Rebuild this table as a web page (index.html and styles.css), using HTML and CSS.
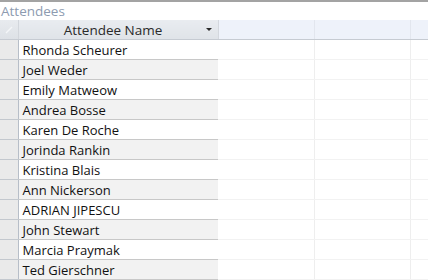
FILE: index.html
```html
<!DOCTYPE html>
<html>
<head>
<meta charset="utf-8">
<link rel="stylesheet" href="styles.css">
</head>
<body>
<div class="sheet">
  <div class="title">Attendees</div>
  <table class="grid">
    <colgroup>
      <col class="c-sel"><col class="c-name"><col class="c-empty"><col class="c-empty"><col class="c-rest">
    </colgroup>
    <thead>
      <tr>
        <th class="sel"><svg width="10" height="10" viewBox="0 0 10 10"><path d="M2 8 L8 2" stroke="#f4f6f8" stroke-width="1.4"/></svg></th>
        <th class="name">Attendee Name<span class="arrow"></span></th>
        <th class="blank"></th><th class="blank"></th><th class="blank"></th>
      </tr>
    </thead>
    <tbody>
      <tr><td class="sel"></td><td class="name">Rhonda Scheurer</td><td class="blank"></td><td class="blank"></td><td class="blank"></td></tr>
      <tr><td class="sel"></td><td class="name">Joel Weder</td><td class="blank"></td><td class="blank"></td><td class="blank"></td></tr>
      <tr><td class="sel"></td><td class="name">Emily Matweow</td><td class="blank"></td><td class="blank"></td><td class="blank"></td></tr>
      <tr><td class="sel"></td><td class="name">Andrea Bosse</td><td class="blank"></td><td class="blank"></td><td class="blank"></td></tr>
      <tr><td class="sel"></td><td class="name">Karen De Roche</td><td class="blank"></td><td class="blank"></td><td class="blank"></td></tr>
      <tr><td class="sel"></td><td class="name">Jorinda Rankin</td><td class="blank"></td><td class="blank"></td><td class="blank"></td></tr>
      <tr><td class="sel"></td><td class="name">Kristina Blais</td><td class="blank"></td><td class="blank"></td><td class="blank"></td></tr>
      <tr><td class="sel"></td><td class="name">Ann Nickerson</td><td class="blank"></td><td class="blank"></td><td class="blank"></td></tr>
      <tr><td class="sel"></td><td class="name">ADRIAN JIPESCU</td><td class="blank"></td><td class="blank"></td><td class="blank"></td></tr>
      <tr><td class="sel"></td><td class="name">John Stewart</td><td class="blank"></td><td class="blank"></td><td class="blank"></td></tr>
      <tr><td class="sel"></td><td class="name">Marcia Praymak</td><td class="blank"></td><td class="blank"></td><td class="blank"></td></tr>
      <tr><td class="sel"></td><td class="name">Ted Gierschner</td><td class="blank"></td><td class="blank"></td><td class="blank"></td></tr>
    </tbody>
  </table>
</div>
</body>
</html>
```
FILE: styles.css
```css
html, body {
  margin: 0;
  padding: 0;
  background: #ffffff;
  overflow: hidden;
}

.sheet {
  width: 428px;
  height: 280px;
  font-family: "Open Sans", "Noto Sans", sans-serif;
}

.title {
  height: 18px;
  border-top: 2px solid #a3a3a3;
  color: #8d9bb0;
  font-size: 13.5px;
  line-height: 19px;
  padding-left: 1px;
  box-sizing: content-box;
}

.grid {
  border-collapse: collapse;
  table-layout: fixed;
  width: 440px;
}

.c-sel { width: 18px; }
.c-name { width: 200px; }
.c-empty { width: 96px; }
.c-rest { width: 30px; }

.grid th, .grid td {
  height: 19px;
  padding: 0;
  font-size: 12.5px;
  font-weight: normal;
  white-space: nowrap;
  overflow: hidden;
}

.grid thead th {
  height: 19px;
  border-bottom: 1px solid #c6cbd2;
}

.grid th.sel {
  background: linear-gradient(#e8ebef, #dde1e6);
  border-right: 1px solid #d2d6dc;
  text-align: center;
  vertical-align: middle;
}

.grid th.sel svg { display: block; margin: 0 auto; }

.grid th.name {
  position: relative;
  background: linear-gradient(#e9ecf0, #dfe3e8);
  color: #2a2a2a;
  text-align: center;
  border-right: 1px solid #d4d8de;
  padding-right: 10px;
  font-size: 13.5px;
}

.arrow {
  position: absolute;
  right: 6px;
  top: 8px;
  width: 0;
  height: 0;
  border-left: 3px solid transparent;
  border-right: 3px solid transparent;
  border-top: 3px solid #2a2a2a;
}

.grid th.blank {
  background: #eef2fa;
  border-right: 1px solid #e2e6ee;
}

.grid td.sel {
  background: #eaeaea;
  border-bottom: 1px solid #c3c8ce;
  border-right: 1px solid #b7bec8;
}

.grid td.name {
  color: #111111;
  padding-left: 4px;
  border-bottom: 1px solid #c8c8c8;
  background: #ffffff;
  font-size: 13px;
}

.grid tbody tr:nth-child(even) td.name {
  background: #f2f2f2;
}

.grid td.blank {
  background: #ffffff;
  border-bottom: 1px solid #f2f2f2;
  border-right: 1px solid #eeeeee;
}
```
